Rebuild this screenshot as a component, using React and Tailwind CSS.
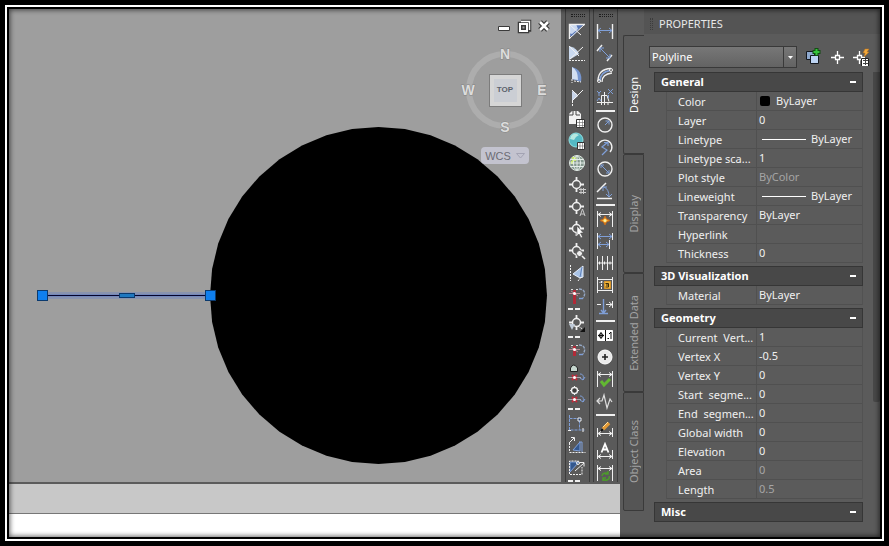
import { useState } from "react";

const W = "#f0f0f0";
const B = "#7f9fd8";

const Icon = ({ children, size = 18 }) => (
  <svg width={size} height={size} viewBox={`0 0 ${size} ${size}`} fill="none" stroke={W}>
    {children}
  </svg>
);

const Target = ({ children }) => (
  <>
    <path d="M8.5 1v4M8.5 12v4M1 8.500h4M12 8.500h4" strokeWidth="1.8" />
    <circle cx="8.5" cy="8.5" r="4" strokeWidth="1.5" />
    {children}
  </>
);

const Magnet = ({ long }) => (
  <>
    <path d={long ? "M6.500 4v14" : "M6.500 4v10"} stroke="#b22a38" strokeWidth="3" />
    <path d="M1 7.500h11M3 5l7 5" stroke="#b98a93" />
    <path d="M3 3.500h2M8 3.500h2" stroke="#ddd" />
    <path d="M11 3c6 0 7 5 4 9" stroke="#93a6c2" strokeWidth="1.4" strokeDasharray="3 1" />
    <path d="M11 12.500h4" stroke={B} strokeWidth="1.4" />
    <circle cx="6.500" cy="7.500" r="1.500" fill="#fff" stroke="none" />
  </>
);

const SmallMagnet = () => (
  <>
    <path d="M0 13.500h13" stroke="#b0a0a8" />
    <path d="M4 11l5 5M9 11l-5 5" stroke="#c32a3a" strokeWidth="2" />
    <path d="M12 10c3 0 4 2 3 6M12 14l3 2 2-3" stroke={B} />
    <circle cx="6.500" cy="13.500" r="1.500" fill="#fff" stroke="none" />
  </>
);

const DimLine = ({ y }) => (
  <path d={`M2 ${y}h14M5 ${y - 2}l-3 2 3 2M13 ${y - 2}l3 2-3 2`} />
);

const snapTools = [
  {
    name: "Corner",
    icon: (
      <>
        <path d="M1 2h15L5 14H1z" fill="#5877b5" stroke="none" />
        <path d="M1 2h7l2 5-6 5-3-1z" fill="#c9d8f0" stroke="none" />
        <path d="M1.500 17V2.500H17" strokeWidth="1.4" />
        <path d="M2 16L16 3M2 3l11 10" />
      </>
    ),
  },
  {
    name: "Sector",
    icon: (
      <>
        <path d="M1 2q8 2 10 8L1 16z" fill="#cbdaf0" stroke="none" />
        <path d="M1 2l10 10M15 3L2 15" />
        <path d="M1 16.500h16" strokeDasharray="2 1" />
      </>
    ),
  },
  {
    name: "Quadrant",
    icon: (
      <>
        <path d="M4 1q11 3 9 15L4 13z" fill="#7595d0" stroke="none" />
        <path d="M4 1q6 3 6 13l-6-1z" fill="#d3dff2" stroke="none" />
        <path d="M4 13v4M6 15l7 1" strokeDasharray="2 1" />
      </>
    ),
  },
  {
    name: "Angle",
    icon: (
      <>
        <path d="M4 3q5 2 6 5l-6 5z" fill="#c9d6eb" stroke="none" />
        <path d="M4 2l6 6M15 2L4 13" />
        <path d="M4.500 13v5" strokeDasharray="2 1" />
      </>
    ),
  },
  {
    name: "Sheet list",
    icon: (
      <>
        <path d="M1 4l3-3h6l3 3v10H1z" fill="#f2f2f2" stroke="none" />
        <path d="M5 1v4H1M8 1v4h4" stroke="#444" />
        <path d="M8.500 9.500h8v8h-8z" fill="#fff" stroke="#333" />
        <path d="M11.500 10v7M14.500 10v7M9 12.500h7M9 15.500h7" stroke="#666" strokeWidth=".6" />
      </>
    ),
  },
  {
    name: "Map grid",
    icon: (
      <>
        <circle cx="8" cy="8" r="7" fill="#54b9c4" stroke="#8fe0e2" />
        <path d="M3 4q3-4 8-1l-3 2-2 3-4-1z" fill="#b6e8e0" stroke="none" />
        <path d="M9.500 10.500h7v7h-7z" fill="#fff" stroke="#333" />
        <path d="M12 11v6M14.500 11v6M10 14h6" stroke="#666" strokeWidth=".6" />
      </>
    ),
  },
  {
    name: "Globe",
    icon: (
      <>
        <circle cx="9" cy="9" r="7.500" fill="#84988e" stroke="#dfe8e2" />
        <path d="M4 3h4v4H4zM3 7h3v3H3z" fill="#c8e86a" stroke="none" />
        <ellipse cx="9" cy="9" rx="3.500" ry="7" stroke="#e3ece8" />
        <path d="M2 9h14M3 5.500h12M3 12.500h12M9 2v14" stroke="#e3ece8" />
      </>
    ),
  },
  {
    name: "Point number",
    icon: <Target><path d="M13 12v6M15.500 12v6M11 13.500h7M11 16.500h7" stroke="#ccc" /></Target>,
  },
  {
    name: "Point name",
    icon: <Target><path d="M12 18l2.500-7 2.500 7M13 16h3" stroke="#ccc" /></Target>,
  },
  {
    name: "Point object",
    icon: <Target><path d="M9 6v10l2-2 2 4 1.500-1-2-4h3z" fill="#fff" stroke="#444" strokeWidth=".5" /></Target>,
  },
  {
    name: "Zoom to point",
    icon: (
      <Target>
        <circle cx="11.500" cy="11.500" r="3" fill="#eee" stroke="#555" />
        <path d="M14 14l3 3" strokeWidth="1.6" />
      </Target>
    ),
  },
  {
    name: "Profile",
    icon: (
      <>
        <path d="M15 2v11l-3 1-7-4z" fill="#a9c3e6" stroke="#e6eefa" />
        <path d="M14 3l-2 10" stroke="#5f83bd" />
        <path d="M2.500 1v16M10 17l3-4" strokeDasharray="2 1" />
      </>
    ),
  },
  { name: "Magnet", icon: <Magnet long /> },
  null,
  {
    name: "Survey point",
    icon: (
      <Target>
        <path d="M1 10h6l-3 6z" fill="#bfcad8" stroke="none" />
        <path d="M10 12l6 4" strokeDasharray="2 1" />
        <path d="M17 13v5h-5z" fill="#111" stroke="none" />
      </Target>
    ),
  },
  null,
  { name: "Station offset", icon: <Magnet /> },
  {
    name: "Side shot",
    icon: (
      <>
        <path d="M2.500 7.500V4q3-6 7 0v3.500z" fill="#c5d6ce" stroke="#222" />
        <SmallMagnet />
      </>
    ),
  },
  {
    name: "Prism",
    icon: (
      <>
        <path d="M6.500 0v9M2 4.500h9" />
        <circle cx="6.500" cy="4.500" r="3" fill="#3c3c3c" strokeWidth="1.4" />
        <SmallMagnet />
      </>
    ),
  },
  null,
  {
    name: "Grid box",
    icon: (
      <>
        <path d="M1.500 1v15h15M1.500 4.500h10v11" stroke={B} strokeDasharray="3 1" />
        <path d="M10 4h3v3h-3z" fill="#26426f" stroke={W} />
        <path d="M0 16.500h3M15 14v4" />
      </>
    ),
  },
  {
    name: "Grid slope",
    icon: (
      <>
        <path d="M5 14L12 6v9z" fill="#33588f" stroke={B} />
        <path d="M1.500 16.500h16M1.500 7v9" strokeDasharray="2 1" />
        <path d="M1 7l5-5M3 1.500h3.500V5" />
        <path d="M11 6h3v10" stroke={B} />
      </>
    ),
  },
  {
    name: "Grid arrow",
    icon: (
      <>
        <path d="M2 14V4h9z" fill="#33588f" stroke={B} />
        <path d="M1.500 16V3h9M2 16.500h12V9" strokeDasharray="2 1" />
        <path d="M7 13l9-8M12 4.500h4v4" />
        <circle cx="10" cy="5" r="1.500" />
      </>
    ),
  },
  null,
];

const dimTools = [
  {
    name: "Linear",
    icon: (
      <>
        <path d="M1.500 2v15M16.500 2v15" strokeWidth="1.4" />
        <path d="M2 8.500h14M5 6L2 8.500 5 11M13 6l3 2.500-3 2.500" stroke={B} />
      </>
    ),
  },
  {
    name: "Aligned",
    icon: (
      <>
        <path d="M1 7l5-6M11 17l5-6" strokeWidth="1.4" />
        <path d="M4 4l10 10M4 8V4h4M14 10v4h-4" stroke={B} />
      </>
    ),
  },
  {
    name: "Arc length",
    icon: (
      <>
        <path d="M2 15Q2 3 15 2.500M6 16q0-8 10-9" strokeWidth="1.3" />
        <path d="M4 15q0-9 10-10.500" stroke={B} strokeWidth="1.6" />
        <circle cx="3" cy="15" r="1.500" />
        <circle cx="15" cy="4" r="1.500" />
      </>
    ),
  },
  {
    name: "Ordinate",
    icon: (
      <>
        <path d="M5.500 17V7.500H11l2 6M1 14.500h16M8.500 4v13M12 14v3" />
        <path d="M12 1l5 5M17 1l-5 5M1 3l2 2 2-2M3 5v3M1 13l2-3 2 3M12.500 7v3" stroke={B} />
      </>
    ),
  },
  null,
  {
    name: "Radius",
    icon: (
      <>
        <circle cx="9" cy="9" r="7" strokeWidth="1.4" />
        <path d="M9 9l4-4M9.500 5H13v3.500" stroke={B} />
      </>
    ),
  },
  {
    name: "Jogged",
    icon: (
      <>
        <path d="M2 8A7 7 0 1 1 14 14" strokeWidth="1.4" />
        <path d="M6 17l5-5-5-3 6-5M8 4.500h4V8" stroke={B} strokeWidth="1.2" />
      </>
    ),
  },
  {
    name: "Diameter",
    icon: (
      <>
        <circle cx="9" cy="9" r="7" strokeWidth="1.4" />
        <path d="M5 5l8 8M5 8V5h3M13 10v3h-3" stroke={B} />
      </>
    ),
  },
  {
    name: "Angular",
    icon: (
      <>
        <path d="M1 10l9-9M1 16.500h15" strokeWidth="1.5" />
        <path d="M8 5q5 2 5 10M7 9V5h4M10 12l3 3 3-3" stroke={B} />
      </>
    ),
  },
  null,
  {
    name: "Quick",
    icon: (
      <>
        <path d="M1.500 1v16M16.500 1v16" />
        <DimLine y={4.5} />
        <path d="M9 6l1.500 3 3.500 1.500-3.500 1.500L9 15l-1.500-3L4 10.500 7.500 9z" fill="#f0a22c" stroke="#c4671b" />
        <circle cx="9" cy="10.500" r="1.500" fill="#fff39a" stroke="none" />
      </>
    ),
  },
  {
    name: "Baseline",
    icon: (
      <>
        <path d="M1.500 1v16M16.500 1v7M13.500 8v9" />
        <path d="M2 4.500h14M5 2L2 4.500 5 7M13 2l3 2.500L13 7M2 12.500h11M5 10l-3 2.500L5 15M10 10l3 2.500-3 2.500" stroke={B} />
      </>
    ),
  },
  {
    name: "Continue",
    icon: (
      <path d="M1.500 2v14M6.500 2v14M11.500 2v14M16.500 2v14M1 9h16M3.500 7.500v3M8.500 7.500v3M14 7.500v3" />
    ),
  },
  {
    name: "Dimension space",
    icon: (
      <>
        <path d="M1.500 1v16M16.500 1v16M2 3.500h14M2 14.500h14" />
        <path d="M8.500 5.500h6v7h-6z" fill="#f2b63c" stroke="#d9962a" />
        <path d="M9.500 7.500h3v3.500h-3M10 9h2" stroke="#3b2a08" />
        <path d="M5.500 5v8M3.500 7l2-2 2 2" strokeDasharray="2 1" />
      </>
    ),
  },
  {
    name: "Dimension break",
    icon: (
      <>
        <path d="M1 6.500h4M10 6.500h6M13 4l3 2.500-3 2.500M16.500 3v7" />
        <path d="M7.500 1v14M3 15.500h9M5 12l2.500 3 2.500-3" stroke={B} strokeWidth="1.4" />
      </>
    ),
  },
  null,
  {
    name: "Tolerance",
    icon: (
      <>
        <path d="M1.500 4.500h15v10h-15z" fill="#fff" stroke="#fff" />
        <path d="M9.500 4v11M2 9.500h6M5 6v7M11.500 12.500h1.500M15 6v7M13 8l2-2" stroke="#111" />
        <circle cx="5" cy="9.500" r="2" stroke="#111" />
      </>
    ),
  },
  {
    name: "Center mark",
    icon: (
      <>
        <circle cx="9" cy="9" r="7" fill="#e9e9e9" stroke="#fff" />
        <path d="M9 6v6M6 9h6" stroke="#222" strokeWidth="1.6" />
      </>
    ),
  },
  {
    name: "Inspection",
    icon: (
      <>
        <path d="M1.500 1v16M16.500 1v16" />
        <DimLine y={4.5} />
        <path d="M5 11l3 4 6-6" stroke="#62b832" strokeWidth="3" />
      </>
    ),
  },
  {
    name: "Jogged linear",
    icon: <path d="M1 9h5l2-6 3 13 3-9 2 3M4 6L1 9l3 3" stroke="#dedede" strokeWidth="1.2" />,
  },
  null,
  {
    name: "Edit dimension",
    icon: (
      <>
        <path d="M1.500 8v9M16.500 8v9" />
        <DimLine y={13.5} />
        <path d="M7 9l6-6" stroke="#e49a35" strokeWidth="3.500" />
        <path d="M5 11l2-1-1-1z" fill="#111" stroke="#111" />
        <path d="M7 7l5-5" stroke="#ffe0a2" />
      </>
    ),
  },
  {
    name: "Edit dimension text",
    icon: (
      <>
        <path d="M1.500 8v9M16.500 8v9" />
        <DimLine y={14.5} />
        <path d="M5.500 10.500L9 2l3.500 8.500M7 7.500h4" stroke="#fff" strokeWidth="1.8" />
      </>
    ),
  },
  {
    name: "Update dimension",
    icon: (
      <>
        <path d="M1.500 1v16M16.500 1v16" />
        <DimLine y={4.5} />
        <path d="M6 12a3.500 3 0 0 1 6-2M13 12a3.500 3 0 0 1-6 3M12 7v3H9M7 17v-3h3" stroke="#4d9a2c" strokeWidth="1.5" />
      </>
    ),
  },
];

const sections = [
  {
    title: "General",
    rows: [
      { label: "Color", value: "ByLayer", swatch: true },
      { label: "Layer", value: "0" },
      { label: "Linetype", value: "ByLayer", line: true },
      { label: "Linetype sca...", value: "1" },
      { label: "Plot style", value: "ByColor", dim: true },
      { label: "Lineweight", value: "ByLayer", line: true },
      { label: "Transparency", value: "ByLayer" },
      { label: "Hyperlink", value: "" },
      { label: "Thickness", value: "0" },
    ],
  },
  { title: "3D Visualization", rows: [{ label: "Material", value: "ByLayer" }] },
  {
    title: "Geometry",
    rows: [
      { label: "Current  Vert...", value: "1" },
      { label: "Vertex X", value: "-0.5" },
      { label: "Vertex Y", value: "0" },
      { label: "Start  segme...", value: "0" },
      { label: "End  segmen...", value: "0" },
      { label: "Global width", value: "0" },
      { label: "Elevation", value: "0" },
      { label: "Area", value: "0", dim: true },
      { label: "Length", value: "0.5", dim: true },
    ],
  },
  { title: "Misc", rows: [] },
];

// 40-sided outline of the wide polyline
const outline = Array.from({ length: 40 }, (_, i) => {
  const a = (i * Math.PI) / 20;
  return `${(369.5 + 168.5 * Math.cos(a)).toFixed(1)},${(286.5 + 168.5 * Math.sin(a)).toFixed(1)}`;
}).join(" ");

const Toolbar = ({ label, tools, dashed }) => (
  <div
    role="toolbar"
    aria-label={label}
    className="flex w-[25px] shrink-0 flex-col items-center overflow-hidden border-x border-[#3c3c3c] bg-[#5a5a5a]"
  >
    <div className="mt-[5px] mb-[3px] h-[3px] w-[14px] shrink-0 border-y border-dotted border-[#1e1e1e]" />
    {tools.map((tool, i) =>
      tool ? (
        <button key={i} aria-label={tool.name} className="flex h-[22px] w-full shrink-0 items-center pl-[2px]">
          <Icon>{tool.icon}</Icon>
        </button>
      ) : (
        <div key={i} className="flex h-[6px] w-full shrink-0 items-center px-[2px]">
          {dashed ? (
            <div className="flex gap-[2px]">
              <span className="h-[2px] w-[5px] bg-[#f0f0f0]" />
              <span className="h-[2px] w-[5px] bg-[#f0f0f0]" />
            </div>
          ) : (
            <div className="h-[2px] w-full bg-[#f0f0f0]" />
          )}
        </div>
      )
    )}
  </div>
);

const ViewCube = () => (
  <div className="absolute top-[33px] right-2 flex flex-col items-center gap-[9px]">
    <div className="relative flex size-24 items-center justify-center">
      <svg className="absolute inset-0" width="96" height="96" viewBox="0 0 96 96">
        <circle cx="48" cy="48" r="36" fill="none" stroke="#adadad" strokeWidth="6" />
        <g
          fill="#dcdcdc"
          stroke="#858585"
          strokeWidth="1"
          paintOrder="stroke"
          fontFamily="Liberation Sans"
          fontSize="14"
          fontWeight="bold"
          textAnchor="middle"
        >
          <text x="48" y="17">N</text>
          <text x="48" y="90">S</text>
          <text x="11" y="53">W</text>
          <text x="85" y="53">E</text>
        </g>
      </svg>
      <button className="relative size-[33px] border border-[#7c7c7c] bg-[#d6d6d6] p-1 font-['Liberation_Sans'] text-[8px] font-bold text-[#5c626c]">
        <span className="flex size-full items-center justify-center bg-[#cbced4]">TOP</span>
      </button>
    </div>
    <button className="flex h-[17px] items-center gap-[5px] rounded bg-[#c3c3cf] px-1 font-['Liberation_Sans'] text-[11px] text-[#6c6c74]">
      WCS
      <svg width="9" height="6" viewBox="0 0 9 6" fill="none" stroke="#a3a3b3">
        <path d="M.5.5h8l-4 4.500z" />
      </svg>
    </button>
  </div>
);

const WindowButtons = () => (
  <div className="absolute top-[9px] right-[9px] flex gap-1">
    <button aria-label="Minimize">
      <Icon size={16}>
        <path d="M2.500 8.500h11v4h-11z" fill="#fff" stroke="#3a3a3a" />
      </Icon>
    </button>
    <button aria-label="Restore">
      <Icon size={16}>
        <path d="M5 3.500h8.500V12h-2M3.500 5.500h8v8h-8z" stroke="#3a3a3a" strokeWidth="3.500" />
        <path d="M5 3.500h8.500V12" stroke="#fff" strokeWidth="1.4" />
        <path d="M4 6h7v7H4z" fill="#3a3a3a" stroke="#fff" strokeWidth="2" />
        <path d="M6.500 8.500h2v2h-2z" fill="#9e9e9e" stroke="none" />
      </Icon>
    </button>
    <button aria-label="Close">
      <Icon size={16}>
        <path d="M4 4l8 8M12 4l-8 8" stroke="#3a3a3a" strokeWidth="5" />
        <path d="M4 4l8 8M12 4l-8 8" stroke="#fff" strokeWidth="2.500" />
      </Icon>
    </button>
  </div>
);

const Drawing = () => (
  <svg className="block size-full" viewBox="0 0 552 473">
    <polygon points={outline} fill="#000" />
    <path d="M34 286.500h168" stroke="#6f86c4" strokeWidth="7" opacity=".45" />
    <path d="M34 286.500h168" stroke="#5f7cc8" strokeWidth="3" opacity=".5" />
    <path d="M34 286.500h168" stroke="#05052c" />
    <g fill="#0f7fee" stroke="#0b3a6e">
      <rect x="28.500" y="281.500" width="10" height="10" />
      <rect x="196.500" y="281.500" width="10" height="10" />
      <rect x="110.500" y="284.500" width="15" height="4" fill="#1f78c0" />
    </g>
  </svg>
);

const Section = ({ title, rows }) => {
  const [open, setOpen] = useState(true);

  return (
    <section className="mb-[3px]">
      <button
        onClick={() => setOpen(!open)}
        aria-expanded={open}
        className="flex h-5 w-full items-center justify-between border border-[#363636] bg-[#484848] px-[6px] font-bold text-white"
      >
        {title}
        <span className="h-[2px] w-[6px] bg-white" />
      </button>
      {open && rows.length > 0 && (
        <div className="pl-3">
          <table className="w-full table-fixed border-separate border-spacing-0 border-x border-[#525252]">
            <tbody>
              {rows.map(({ label, value, swatch, line, dim }) => (
                <tr key={label} className="h-[19px]">
                  <th
                    scope="row"
                    className="w-[90px] border-r border-b border-[#505050] pt-[2px] pr-0 pb-0 pl-[11px] text-left font-normal whitespace-pre"
                  >
                    {label}
                  </th>
                  <td className={`border-b border-[#505050] py-0 pr-0 pl-[2px] ${dim ? "text-[#a5a5a5]" : "text-[#f0f0f0]"}`}>
                    <div className="flex h-[18px] items-center">
                      {swatch && <span className="mr-[6px] ml-px size-[10px] rounded-xs bg-black" />}
                      {line && <span className="mr-[5px] ml-[3px] h-px w-11 bg-white" />}
                      {value}
                    </div>
                  </td>
                </tr>
              ))}
            </tbody>
          </table>
        </div>
      )}
    </section>
  );
};

const Properties = () => (
  <aside className="flex w-[236px] shrink-0 flex-col bg-[#5b5b5b]">
    <div className="flex h-[25px] shrink-0 items-center gap-[6px] bg-[#545454] pt-1 pl-[6px] text-[#e8e8e8]">
      <span className="h-3 w-[3px] border-x border-dotted border-[#3c3c3c]" />
      <h2>PROPERTIES</h2>
    </div>
    <div className="flex shrink-0 items-center pt-3 pr-[7px] pb-1 pl-[5px]">
      <div className="relative mr-1 h-[22px] flex-1">
        <select
          aria-label="Object type"
          className="size-full appearance-none border border-[#393939] bg-linear-to-b from-[#777777] to-[#636363] pl-[2px] text-white"
        >
          <option>Polyline</option>
        </select>
        <span className="pointer-events-none absolute inset-y-0 right-0 flex w-[14px] items-center justify-center border-l border-[#393939]">
          <svg width="5" height="3" viewBox="0 0 5 3" fill="#fff">
            <path d="M0 0h5L2.500 3z" />
          </svg>
        </span>
      </div>
      <button aria-label="Toggle pickadd" className="flex w-6 justify-center">
        <Icon>
          <path d="M2.500 3.500h8v8h-8z" fill="#8ea9cf" stroke="#14181f" />
          <path d="M6.500 7.500h8v8h-8z" fill="#bcd3f2" stroke="#14181f" />
          <path d="M12.500 0v8M8.500 4h8" stroke="#124d12" strokeWidth="4" />
          <path d="M12.500 1v6M9.500 4h6" stroke="#35c43b" strokeWidth="2" />
        </Icon>
      </button>
      <button aria-label="Select objects" className="flex w-6 justify-center">
        <Icon>
          <path d="M9.500 3v4M9.500 12v4M3 9.500h4M12 9.500h4M7.500 7.500h4v4h-4z" stroke="#fff" strokeWidth="1.3" />
        </Icon>
      </button>
      <button aria-label="Quick select" className="flex w-6 justify-center">
        <Icon>
          <path d="M7.500 3v4M7.500 12v4M1 9.500h4M10 9.500h3M5.500 7.500h4v4h-4z" stroke="#fff" strokeWidth="1.3" />
          <path d="M13 1h4l-2 3h2l-5 5 1-4h-2z" fill="#f3a93b" stroke="#b8701c" strokeWidth=".5" />
          <path d="M9.500 10.500h7v8h-7z" fill="#fff" stroke="#222" />
          <path d="M11 12.500h5M11 15.500h5M13.500 11v6" stroke="#444" />
        </Icon>
      </button>
    </div>
    <div className="flex min-h-0 flex-1">
      <div className="min-w-0 flex-1 overflow-hidden px-[10px]">
        {sections.map((section) => (
          <Section key={section.title} {...section} />
        ))}
      </div>
      <div className="w-[7px]">
        <div className="h-[71%] rounded-b-xs bg-[#484848]" />
      </div>
    </div>
  </aside>
);

const App = () => {
  const [tab, setTab] = useState("Design");

  return (
    <div className="flex h-screen bg-black p-[5px] font-['Noto_Sans',sans-serif] text-[11px] leading-4 text-[#f0f0f0]">
      <div className="flex min-w-0 flex-1 border-2 border-white p-[2px]">
        <div className="relative flex min-w-0 flex-1 overflow-hidden bg-[#5b5b5b]">
          <div className="flex min-w-0 flex-1 flex-col">
            <div className="flex min-h-0 flex-1">
              <main className="relative min-w-0 flex-1 bg-[#9e9e9e]">
                <Drawing />
                <WindowButtons />
                <ViewCube />
              </main>
              <div className="flex gap-[3px] pr-[2px] pl-1">
                <Toolbar label="Snaps" tools={snapTools} dashed />
                <Toolbar label="Dimensions" tools={dimTools} />
              </div>
            </div>
            <div className="h-8 shrink-0 border-t-2 border-b border-t-[#5b5b5b] border-b-[#777777] bg-[#c8c8c8]" />
            <input aria-label="Command" className="h-[23px] shrink-0 bg-white px-2 text-black outline-none" />
          </div>

          <div role="tablist" className="flex w-6 shrink-0 flex-col pt-[26px] pl-[3px]">
            {["Design", "Display", "Extended Data", "Object Class"].map((name) => (
              <button
                key={name}
                role="tab"
                aria-selected={tab === name}
                onClick={() => setTab(name)}
                className={`flex h-[119px] items-center justify-center rounded-l-xs border border-[#3a3a3a] ${
                  tab === name ? "border-r-0 bg-[#5b5b5b] text-white" : "bg-[#555555] text-[#a3a3a3]"
                }`}
              >
                <span className="rotate-180 [writing-mode:vertical-rl]">{name}</span>
              </button>
            ))}
          </div>

          <Properties />
          <div className="pointer-events-none absolute inset-0 shadow-[inset_0_0_5px_1px_rgba(0,0,0,0.6)]" />
        </div>
      </div>
    </div>
  );
};

export default App;
